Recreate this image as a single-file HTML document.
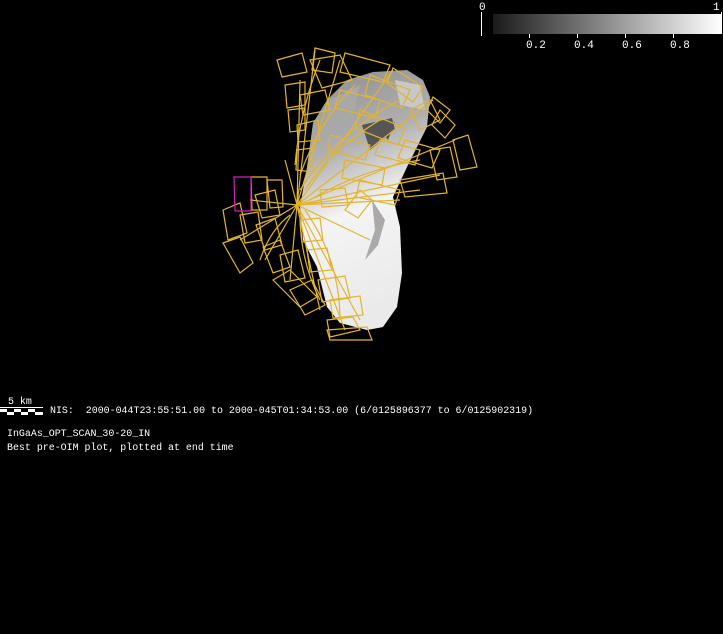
<!DOCTYPE html>
<html><head><meta charset="utf-8"><style>
html,body{margin:0;padding:0;background:#000;width:723px;height:634px;overflow:hidden}
.t{position:absolute;color:#fff;font-family:"Liberation Mono",monospace;font-size:9.95px;line-height:11px;white-space:pre}
</style></head><body>
<svg width="723" height="634" style="position:absolute;left:0;top:0">
<defs>
<linearGradient id="g" x1="0" x2="1"><stop offset="0" stop-color="#1a1a1a"/><stop offset="1" stop-color="#fff"/></linearGradient>
<linearGradient id="ast" x1="0" y1="0" x2="0.2" y2="1"><stop offset="0" stop-color="#8c8c8c"/><stop offset="0.35" stop-color="#b0b0b0"/><stop offset="0.5" stop-color="#d8d8d8"/><stop offset="0.6" stop-color="#f4f4f4"/><stop offset="1" stop-color="#eaeaea"/></linearGradient>
</defs>
<rect x="493" y="14" width="228" height="20" fill="url(#g)"/>
<line x1="481.5" y1="12" x2="481.5" y2="36" stroke="#fff"/>
<line x1="721.5" y1="12" x2="721.5" y2="34" stroke="#fff"/>
<g stroke="#fff"><line x1="529.5" y1="34" x2="529.5" y2="38"/><line x1="577.5" y1="34" x2="577.5" y2="38"/><line x1="625.5" y1="34" x2="625.5" y2="38"/><line x1="673.5" y1="34" x2="673.5" y2="38"/></g>
<g fill="#fff" font-family="Liberation Mono,monospace" font-size="11">
<text x="479" y="10">0</text><text x="713" y="10">1</text>
<text x="526" y="48">0.2</text><text x="574" y="48">0.4</text><text x="622" y="48">0.6</text><text x="670" y="48">0.8</text></g>
<path d="M373,72 L407,70 L423,80 L430,97 L427,127 L417,147 L407,167 L393,197 L400,227 L402,273 L397,307 L383,327 L367,330 L340,323 L327,307 L317,267 L303,240 L300,207 L307,167 L313,123 L327,100 L347,80 Z" fill="url(#ast)"/>
<path d="M330,100 L360,85 L350,130 L320,140Z" fill="#a8a8a8"/>
<path d="M395,80 L420,85 L425,110 L400,105Z" fill="#c8c8c8"/>
<path d="M362,125 L392,118 L395,130 L370,150Z M380,130 L395,122 L388,140Z" fill="#555"/>
<path d="M372,200 L385,220 L378,245 L365,260 L375,230Z" fill="#aaa"/>
<g fill="none" stroke="#e2b430" stroke-width="1.2">
<path d="M277,60 L302,53 L307,72 L282,77Z"/>
<path d="M315,48 L335,53 L332,73 L312,70Z"/>
<path d="M345,53 L390,65 L383,82 L340,72Z"/>
<path d="M393,68 L423,87 L413,102 L387,83Z"/>
<path d="M433,97 L450,110 L440,123 L427,110Z"/>
<path d="M440,110 L455,125 L445,138 L432,125Z"/>
<path d="M453,140 L468,135 L477,167 L460,170Z"/>
<path d="M430,150 L450,147 L457,177 L437,180Z"/>
<path d="M400,180 L443,173 L447,193 L405,197Z"/>
<path d="M251,177 L267,177 L267,210 L252,210Z"/>
<path d="M267,180 L282,180 L283,207 L270,208Z"/>
<path d="M223,210 L240,203 L247,233 L228,240Z"/>
<path d="M223,243 L240,237 L253,263 L240,273Z"/>
<path d="M263,247 L280,240 L290,267 L273,273Z"/>
<path d="M273,280 L290,270 L317,297 L300,307Z"/>
<path d="M327,320 L353,317 L360,330 L330,337Z"/>
<path d="M327,330 L367,327 L372,340 L330,340Z"/>
<path d="M300,95 L325,90 L330,110 L303,115Z"/>
<path d="M297,125 L318,120 L320,140 L298,142Z"/>
<path d="M297,150 L312,148 L312,172 L296,170Z"/>
<path d="M340,90 L380,100 L375,118 L335,108Z"/>
<path d="M360,110 L405,128 L398,145 L355,128Z"/>
<path d="M330,135 L370,145 L365,160 L328,150Z"/>
<path d="M345,160 L385,168 L382,185 L342,178Z"/>
<path d="M405,140 L440,150 L432,168 L398,158Z"/>
<path d="M410,110 L430,100 L440,120 L420,130Z"/>
<path d="M360,180 L400,190 L395,205 L356,197Z"/>
<path d="M300,220 L320,218 L323,240 L302,242Z"/>
<path d="M307,250 L327,248 L332,270 L310,272Z"/>
<path d="M318,280 L345,276 L350,298 L322,302Z"/>
<path d="M330,300 L360,296 L363,315 L333,318Z"/>
<path d="M280,255 L298,250 L305,278 L285,282Z"/>
<path d="M320,190 L345,188 L348,205 L322,207Z"/>
<path d="M345,210 L360,190 L372,200 L358,218Z"/>
<path d="M310,60 L340,55 L352,80 L322,88Z"/>
<path d="M285,85 L305,82 L305,105 L287,108Z"/>
<path d="M288,110 L305,108 L305,130 L290,132Z"/>
<path d="M255,195 L275,190 L280,215 L262,218Z"/>
<path d="M240,215 L258,212 L262,240 L245,243Z"/>
<path d="M256,225 L275,218 L282,245 L265,250Z"/>
<path d="M370,75 L410,90 L402,108 L365,95Z"/>
<path d="M380,140 L420,150 L415,165 L375,155Z"/>
<path d="M290,290 L312,280 L325,305 L305,315Z"/>
<path d="M297,205 L340,60 M297,205 L393,70 M297,205 L433,100 M297,205 L455,140 M297,205 L440,175 M297,205 L420,190 M297,205 L300,80 M297,205 L285,160 M297,205 L250,200 M297,205 L240,240 M297,205 L265,260 M297,205 L290,280 M297,205 L320,310 M297,205 L345,330 M297,205 L360,320 M297,205 L315,50 M297,205 L370,240 M297,205 L400,200"/>
<path d="M305,190 Q330,150 380,120 M300,175 Q320,120 355,85 M310,200 Q360,170 420,160 M290,215 Q270,230 260,260 M300,215 Q300,260 320,300 M305,210 Q340,260 340,320 M295,165 Q300,110 320,60 M300,190 Q340,130 400,100"/>
</g>
<path d="M234,177 L251,177 L251,211 L235,211Z" fill="none" stroke="#d020c0" stroke-width="1.2"/>
<line x1="0" y1="407.5" x2="43" y2="407.5" stroke="#fff"/>
<g fill="#fff"><rect x="0" y="409" width="7" height="3"/><rect x="7" y="412" width="7" height="3"/><rect x="14" y="409" width="7" height="3"/><rect x="21" y="412" width="7" height="3"/><rect x="28" y="409" width="7" height="3"/><rect x="35" y="412" width="8" height="3"/></g>
</svg>
<div class="t" style="left:8px;top:396px">5 km</div>
<div class="t" style="left:50px;top:405px">NIS:  2000-044T23:55:51.00 to 2000-045T01:34:53.00 (6/0125896377 to 6/0125902319)</div>
<div class="t" style="left:7px;top:428px">InGaAs_OPT_SCAN_30-20_IN</div>
<div class="t" style="left:7px;top:442px">Best pre-OIM plot, plotted at end time</div>
</body></html>
